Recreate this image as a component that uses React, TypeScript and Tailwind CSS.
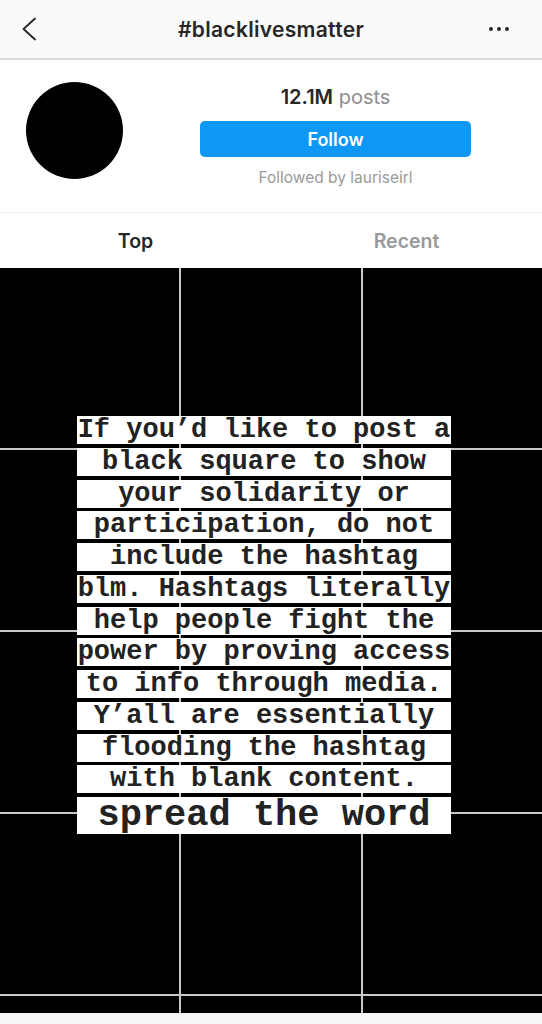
const lines = [
  "If you’d like to post a",
  "black square to show",
  "your solidarity or",
  "participation, do not",
  "include the hashtag",
  "blm. Hashtags literally",
  "help people fight the",
  "power by proving access",
  "to info through media.",
  "Y’all are essentially",
  "flooding the hashtag",
  "with blank content.",
];

const tiles = Array.from({ length: 15 }, (_, i) => i);

export default function App() {
  return (
    <div className="w-[542px] min-h-[1024px] bg-[#f7f7f7] font-['Inter',sans-serif] text-[#262626]">
      <header className="flex h-[60px] items-center border-b-2 border-[#dcdcdc] bg-[#fafafa]">
        <div className="flex w-[70px] pl-[21px]">
          <svg viewBox="0 0 16 24" className="h-[24px] w-[16px]" fill="none">
            <path d="M14 1.5L2.5 12L14 22.5" stroke="#262626" strokeWidth="1.8" strokeLinecap="round" strokeLinejoin="round" />
          </svg>
        </div>
        <h1 className="flex-1 pt-[1px] text-center text-[21px] font-semibold leading-none tracking-[0.3px]">#blacklivesmatter</h1>
        <div className="flex w-[70px] justify-end gap-[4px] pr-[33px]">
          <span className="h-[4px] w-[4px] rounded-full bg-[#262626]" />
          <span className="h-[4px] w-[4px] rounded-full bg-[#262626]" />
          <span className="h-[4px] w-[4px] rounded-full bg-[#262626]" />
        </div>
      </header>

      <section className="flex h-[153px] border-b border-[#efefef] bg-white pt-[22px]">
        <div className="ml-[26px] h-[97px] w-[97px] rounded-full bg-black" />
        <div className="ml-[77px] mt-[3px] flex w-[271px] flex-col items-center">
          <p className="text-[20px] leading-[24px]">
            <span className="font-semibold text-[#262626]">12.1M</span>
            <span className="text-[#8e8e8e]"> posts</span>
          </p>
          <button className="mt-[12px] h-[36px] w-full rounded-[5px] bg-[#0f97f6] text-[18px] font-semibold text-white">
            Follow
          </button>
          <p className="mt-[11px] text-[15.5px] leading-[20px] text-[#9a9a9a]">Followed by lauriseirl</p>
        </div>
      </section>

      <nav className="flex h-[55px] items-center bg-white pt-[3px]">
        <div className="flex-1 text-center text-[19.5px] font-semibold text-[#262626]">Top</div>
        <div className="flex-1 text-center text-[19.5px] font-semibold text-[#999999]">Recent</div>
      </nav>

      <div className="relative">
        <div className="grid grid-cols-3 gap-[2px] bg-[#c8c8c8]">
          {tiles.map((t) => (
            <div key={t} className={t < 12 ? "h-[180px] bg-black" : "h-[17px] bg-black"} />
          ))}
        </div>

        <div className="absolute left-[77px] top-[148px] flex w-[374px] flex-col gap-[3.75px] font-['Liberation_Mono','Courier_New',monospace] font-bold text-[#222222]">
          {lines.map((line) => (
            <div key={line} className="h-[28px] whitespace-nowrap bg-white text-center text-[27px] leading-[28px]">
              {line}
            </div>
          ))}
          <div className="h-[37px] whitespace-nowrap bg-white text-center text-[37px] leading-[37px]">spread the word</div>
        </div>
      </div>
    </div>
  );
}
